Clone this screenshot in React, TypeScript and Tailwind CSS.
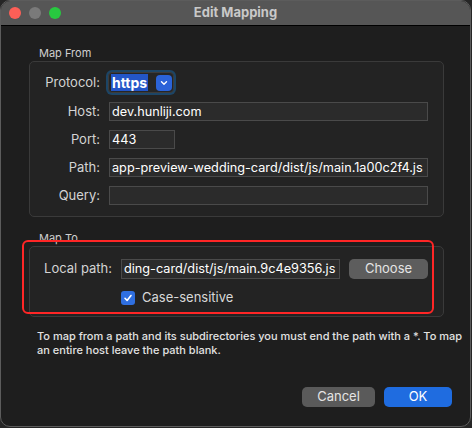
import React from 'react';

const font = { fontFamily: 'Inter, "Liberation Sans", sans-serif' };

const Field: React.FC<{ value?: string; className?: string }> = ({ value = '', className = '' }) => (
  <div
    className={`h-[19px] bg-[#2b2b2b] border border-[#4a4a4a] flex items-center overflow-hidden whitespace-nowrap text-[12.7px] text-white px-[2px] ${className}`}
  >
    <span className="shrink-0">{value}</span>
  </div>
);

const Row: React.FC<{ label: string; children: React.ReactNode; className?: string }> = ({ label, children, className = '' }) => (
  <div className={`flex items-center ${className}`}>
    <div className="w-[70px] text-right text-[13px] text-[#d4d4d4]">{label}</div>
    <div className="ml-[9px] flex items-center">{children}</div>
  </div>
);

const App: React.FC = () => {
  return (
    <div className="w-[472px] h-[428px] bg-[#262626]" style={font}>
      <div className="w-[471px] h-[427px] rounded-[10px] border border-[#5c5c5c] bg-[#1e1e1e] overflow-hidden flex flex-col">
        {/* Title bar */}
        <div className="h-[25px] shrink-0 bg-[#565656] border-b border-black grid grid-cols-[1fr_auto_1fr] items-center">
          <div className="flex items-center gap-[8px] pl-[8px]">
            <span className="w-[12px] h-[12px] rounded-full bg-[#fe5f57]" />
            <span className="w-[12px] h-[12px] rounded-full bg-[#7a7a7a]" />
            <span className="w-[12px] h-[12px] rounded-full bg-[#28c840]" />
          </div>
          <div className="text-[13px] font-bold text-[#c9c9c9]">Edit Mapping</div>
          <div />
        </div>

        {/* Body */}
        <div className="flex flex-col pl-[28px]">
          <div className="mt-[21px] ml-[10px] text-[11px] leading-[13px] text-[#cfcfcf]">Map From</div>
          <div className="mt-[1px] w-[415px] rounded-[5px] border border-[#3a3a3a] bg-[#232323] pt-[8px] pb-[11px] flex flex-col">
            <Row label="Protocol:" className="h-[25px]">
              <div className="-ml-[3px] w-[70px] h-[25px] rounded-[6px] bg-[#1c4566] p-[2px]">
                <div className="w-full h-full rounded-[4px] bg-[#262626] border border-[#3c3c3c] flex items-center justify-between pl-[2px] pr-[1px]">
                  <span className="h-[17px] leading-[17px] px-[1px] bg-[#2356c8] text-white font-bold text-[14px]">https</span>
                  <span className="w-[16px] h-[16px] rounded-[4px] bg-[#2b63d8] flex items-center justify-center">
                    <svg width="8" height="6" viewBox="0 0 8 6" fill="none">
                      <path d="M1.5 1.8 L4 4.2 L6.5 1.8" stroke="white" strokeWidth="1.4" strokeLinecap="round" strokeLinejoin="round" />
                    </svg>
                  </span>
                </div>
              </div>
            </Row>
            <Row label="Host:" className="mt-[7px] h-[19px]">
              <Field value="dev.hunliji.com" className="w-[319px]" />
            </Row>
            <Row label="Port:" className="mt-[9px] h-[19px]">
              <Field value="443" className="w-[66px]" />
            </Row>
            <Row label="Path:" className="mt-[9px] h-[19px]">
              <Field value="app-preview-wedding-card/dist/js/main.1a00c2f4.js" className="w-[319px]" />
            </Row>
            <Row label="Query:" className="mt-[9px] h-[19px]">
              <Field className="w-[319px]" />
            </Row>
          </div>

          <div className="mt-[15px] ml-[10px] text-[11px] leading-[13px] text-[#cfcfcf]">Map To</div>
          <div className="relative mt-[1px] w-[415px] rounded-[5px] border border-[#3a3a3a] bg-[#232323] pt-[12px] pb-[11px] flex flex-col">
            <div className="flex items-center h-[20px]">
              <div className="w-[82px] text-right text-[13px] text-[#d4d4d4]">Local path:</div>
              <Field value="ding-card/dist/js/main.9c4e9356.js" className="ml-[9px] w-[219px] h-[20px]" />
              <button className="ml-[9px] w-[79px] h-[20px] rounded-[5px] bg-[#5d5d5d] text-[13px] text-[#e4e4e4]">
                Choose
              </button>
            </div>
            <label className="mt-[12px] ml-[91px] flex items-center h-[14px]">
              <span className="w-[14px] h-[14px] rounded-[3px] bg-[#2f6fe0] flex items-center justify-center">
                <svg width="10" height="10" viewBox="0 0 10 10" fill="none">
                  <path d="M2 5.3 L4.1 7.5 L8 2.5" stroke="white" strokeWidth="1.6" strokeLinecap="round" strokeLinejoin="round" />
                </svg>
              </span>
              <span className="ml-[7px] text-[13px] text-[#d8d8d8]">Case-sensitive</span>
            </label>
            {/* red annotation */}
            <div className="absolute -left-[8px] -top-[7px] w-[412px] h-[74px] rounded-[6px] border-2 border-[#ff2626] pointer-events-none" />
          </div>

          <p className="mt-[12px] ml-[8px] text-[11px] leading-[14px] text-[#e2e2e2] font-medium">
            To map from a path and its subdirectories you must end the path with a *. To map
            <br />
            an entire host leave the path blank.
          </p>

          <div className="mt-[30px] flex justify-end gap-[9px] pr-[18px]">
            <button className="w-[73px] h-[20px] rounded-[5px] bg-[#5a5a5a] text-[13px] text-[#e4e4e4]">Cancel</button>
            <button className="w-[68px] h-[20px] rounded-[5px] bg-[#1f6ce0] text-[13px] text-white">OK</button>
          </div>
        </div>
      </div>
    </div>
  );
};

export default App;
